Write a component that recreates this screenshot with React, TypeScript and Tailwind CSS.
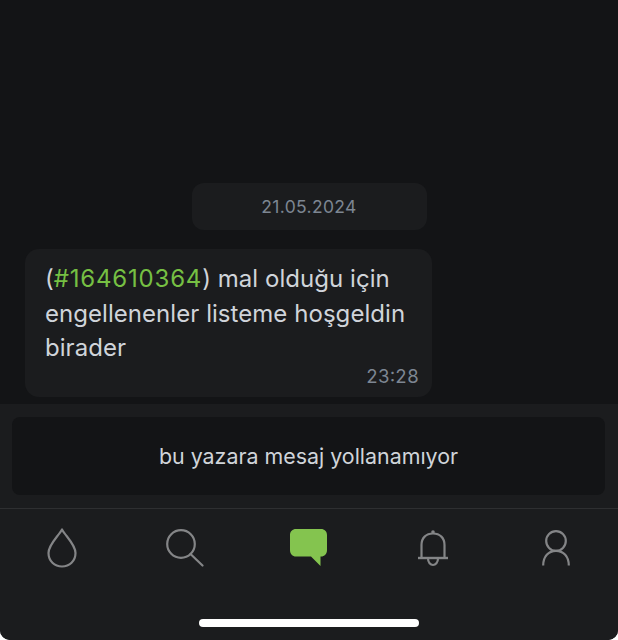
import React from 'react';

const DropIcon = () => (
  <svg width="30" height="40" viewBox="0 0 30 40" fill="none" stroke="#848587" strokeWidth="2.2">
    <path d="M15 1.5 C11.5 8 1.5 16.5 1.5 25 C1.5 33 7.5 38.5 15 38.5 C22.5 38.5 28.5 33 28.5 25 C28.5 16.5 18.5 8 15 1.5 Z" strokeLinejoin="round" />
  </svg>
);

const SearchIcon = () => (
  <svg width="38" height="38" viewBox="0 0 38 38" fill="none" stroke="#848587" strokeWidth="2.2">
    <circle cx="15" cy="15" r="13.8" />
    <path d="M24.5 25 L36.5 36.5" strokeLinecap="round" />
  </svg>
);

const ChatIcon = () => (
  <svg width="37" height="37" viewBox="0 0 37 37">
    <path
      d="M6 0 H31 C34.5 0 37 2.5 37 6 V21 C37 25 34.5 27.5 31 27.5 H30.5 V37 L21 27.5 H6 C2.5 27.5 0 25 0 21 V6 C0 2.5 2.5 0 6 0 Z"
      fill="#84c44f"
    />
  </svg>
);

const BellIcon = () => (
  <svg width="30" height="37" viewBox="0 0 30 37" fill="none" stroke="#848587" strokeWidth="2.2">
    <path d="M3.5 28 V15 C3.5 8 8 3.5 15 3.5 C22 3.5 26.5 8 26.5 15 V28" />
    <path d="M0 28 H30" strokeWidth="2.4" />
    <path d="M10 28.5 C10 32.5 12.5 35 15 35 C17.5 35 20 32.5 20 28.5" />
    <circle cx="15" cy="2" r="1.8" fill="#848587" stroke="none" />
  </svg>
);

const UserIcon = () => (
  <svg width="28" height="36" viewBox="0 0 28 36" fill="none" stroke="#848587" strokeWidth="2.2">
    <circle cx="14" cy="11" r="9.8" />
    <path d="M1.2 35.5 C1.2 26.5 6.5 20.8 14 20.8 C21.5 20.8 26.8 26.5 26.8 35.5" />
  </svg>
);

const navItems = [
  { key: 'drop', icon: <DropIcon />, offset: 'pt-0' },
  { key: 'search', icon: <SearchIcon />, offset: 'pt-[1px]' },
  { key: 'chat', icon: <ChatIcon />, offset: 'pt-[1px]' },
  { key: 'bell', icon: <BellIcon />, offset: 'pt-[2px]' },
  { key: 'user', icon: <UserIcon />, offset: 'pt-[2px]' },
];

export default function App() {
  return (
    <div className="h-[640px] w-[618px] overflow-hidden rounded-b-[10px] bg-[#131416] flex flex-col font-['Inter','Liberation_Sans',sans-serif]">
      {/* Mesajlar */}
      <div className="h-[404px] flex flex-col pt-[183px]">
        <div className="self-center w-[235px] h-[47px] pt-[1px] rounded-[12px] bg-[#1b1c1e] flex items-center justify-center text-[17.5px] tracking-[0.35px] text-[#7d8692]">
          21.05.2024
        </div>
        <div className="mt-[19px] ml-[25px] w-[407px] h-[148px] rounded-[14px] bg-[#1b1c1e] pt-[13px] pl-[20px] pr-[12px]">
          <p className="text-[24px] leading-[34.5px] tracking-[0.05px] text-[#d0d4da]">
            (<span className="text-[#76c043] tracking-[0.8px]">#164610364</span>) mal olduğu için engellenenler listeme hoşgeldin birader
          </p>
          <div className="text-right text-[18.5px] leading-[24px] tabular-nums text-[#7d8692] -mt-[2px] pr-[1px]">23:28</div>
        </div>
      </div>

      {/* Yazma alanı */}
      <div className="h-[105px] bg-[#1b1c1e] border-b border-[#2e2f31] pt-[13px] pl-[12px] pr-[13px]">
        <div className="h-[78px] pt-[1px] rounded-[8px] bg-[#131416] flex items-center justify-center text-[21.4px] text-[#d0d4da]">
          bu yazara mesaj yollanamıyor
        </div>
      </div>

      {/* Alt menü */}
      <div className="flex-1 bg-[#1b1c1e] flex flex-col">
        <div className="flex h-[110px] pt-[19px]">
          {navItems.map((item) => (
            <div key={item.key} className={`flex-1 flex justify-center items-start ${item.offset}`}>
              {item.icon}
            </div>
          ))}
        </div>
        <div className="self-center w-[220px] h-[8px] rounded-full bg-white" />
      </div>
    </div>
  );
}
